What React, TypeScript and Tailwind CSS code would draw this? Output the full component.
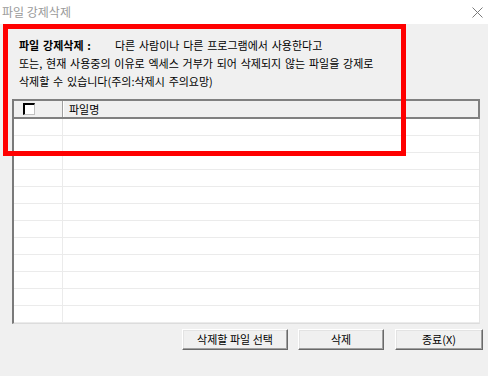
import React from 'react';

const font = { fontFamily: '"Noto Sans CJK KR", "Noto Sans", sans-serif' };

function CloseIcon() {
  return (
    <svg width="11" height="11" viewBox="0 0 11 11" className="block">
      <path d="M0.5 0.5 L10.5 10.5 M10.5 0.5 L0.5 10.5" stroke="#7a7a7a" strokeWidth="1" />
    </svg>
  );
}

function Button({ label, w }: { label: string; w: string }) {
  return (
    <button
      className={`${w} h-[21px] bg-[#f0f0f0] text-[11px] text-black leading-none border border-t-white border-l-white border-r-[#696969] border-b-[#696969] shadow-[inset_-1px_-1px_#a0a0a0,inset_1px_1px_#e3e3e3] flex items-center justify-center`}
    >
      {label}
    </button>
  );
}

export default function App() {
  const rows = Array.from({ length: 12 });

  return (
    <div className="relative w-[488px] h-[376px] bg-[#f0f0f0] overflow-hidden text-black" style={font}>
      {/* 타이틀 바 */}
      <div className="h-[24px] bg-white flex items-center justify-between pl-[2px] pr-[5px]">
        <span className="text-[12px] text-[#9a9a9a] leading-none">파일 강제삭제</span>
        <CloseIcon />
      </div>

      {/* 설명 */}
      <div className="pt-[12px] pl-[19px] text-[11px] leading-[18px] [word-spacing:1.3px]">
        <div className="flex">
          <span className="w-[96px] font-bold">파일 강제삭제 :</span>
          <span>다른 사람이나 다른 프로그램에서 사용한다고</span>
        </div>
        <div>또는, 현재 사용중의 이유로 엑세스 거부가 되어 삭제되지 않는 파일을 강제로</div>
        <div>삭제할 수 있습니다(주의:삭제시 주의요망)</div>
      </div>

      {/* 파일 목록 */}
      <div className="mt-[9px] ml-[12px] w-[468px] h-[225px] flex flex-col bg-white border-l-2 border-l-[#7a7a7a] border-r border-r-[#e3e3e3] border-b border-b-[#dcdcdc]">
        <div className="h-[20px] shrink-0 flex bg-[#f0f0f0] border-2 border-[#808080] border-l-0 -mr-[1px]">
          <div className="w-[49px] flex items-center pl-[9px] border-r border-r-[#a0a0a0] shadow-[1px_0_white]">
            <div className="w-[12px] h-[12px] bg-white border-t-2 border-l-2 border-t-black border-l-black border-r border-b border-r-[#c0c0c0] border-b-[#c0c0c0]" />
          </div>
          <div className="flex-1 flex items-center pl-[6px] text-[11px] leading-none">파일명</div>
        </div>
        {rows.map((_, i) => (
          <div key={i} className="h-[17px] shrink-0 flex border-b border-b-[#ebebeb]">
            <div className="w-[49px] border-r border-r-[#ebebeb]" />
            <div className="flex-1" />
          </div>
        ))}
      </div>

      {/* 버튼 */}
      <div className="mt-[5px] mr-[5px] flex justify-end">
        <Button label="삭제할 파일 선택" w="w-[106px]" />
        <div className="w-[10px]" />
        <Button label="삭제" w="w-[86px]" />
        <div className="w-[11px]" />
        <Button label="종료(X)" w="w-[88px]" />
      </div>

      {/* 빨간 강조 박스 */}
      <div className="absolute left-[3px] top-[24px] w-[403px] h-[132px] border-[5px] border-[#ff0000] pointer-events-none" />
    </div>
  );
}
